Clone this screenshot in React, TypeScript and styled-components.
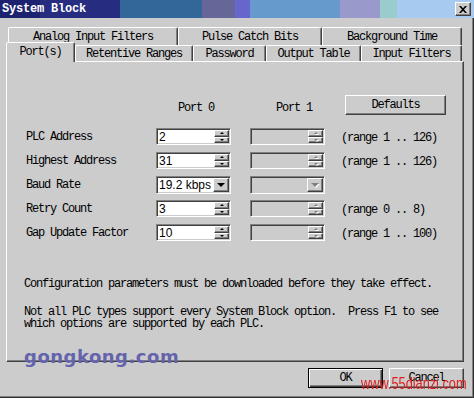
import React from 'react';
import styled, { createGlobalStyle, css } from 'styled-components';

const MONO = '"Liberation Mono", "DejaVu Sans Mono", monospace';
const SANS = '"Liberation Sans", Arial, sans-serif';
const FACE = '#cccccc';

const Global = createGlobalStyle`
  html, body { margin: 0; padding: 0; }
  body { background: ${FACE}; }
  * { box-sizing: border-box; }
`;

const Window = styled.div`
  position: relative;
  width: 474px;
  height: 398px;
  background: ${FACE};
  font-family: ${MONO};
  font-size: 12px;
  line-height: 12px;
  letter-spacing: -1.2px;
  color: #000;
  overflow: hidden;
  display: flex;
  flex-direction: column;
  box-shadow: inset -1px -1px 0 #303030, inset -2px -2px 0 #808080;
`;

const TitleBar = styled.div`
  height: 18px;
  display: flex;
  align-items: center;
  justify-content: space-between;
  padding: 0 3px 0 2px;
  background: linear-gradient(
    to right,
    #1c2270 0 40px,
    #262c80 40px 120px,
    #336699 120px 202px,
    #666699 202px 235px,
    #6666cc 235px 250px,
    #6699cc 250px 340px,
    #9999cc 340px 380px,
    #99cccc 380px 397px,
    #a6caf0 397px
  );
`;

const Title = styled.span`
  color: #fff;
  font-weight: bold;
  letter-spacing: -0.2px;
`;

const CloseButton = styled.div`
  width: 16px;
  height: 14px;
  display: flex;
  align-items: center;
  justify-content: center;
  background: ${FACE};
  border: 1px solid;
  border-color: #fff #404040 #404040 #fff;
  box-shadow: inset -1px -1px 0 #808080;
`;

const TabArea = styled.div`
  display: flex;
  flex-direction: column;
  padding-top: 9px;
`;

const TabRow = styled.div<{ $indent: number; $height: number }>`
  display: flex;
  align-items: flex-end;
  height: ${(p) => p.$height}px;
  padding-left: ${(p) => p.$indent}px;
`;

const Tab = styled.div<{ $w: number; $active?: boolean }>`
  width: ${(p) => p.$w}px;
  height: 100%;
  display: flex;
  align-items: center;
  justify-content: center;
  background: ${FACE};
  border-top: 1px solid #fff;
  border-left: 1px solid #fff;
  border-right: 1px solid #404040;
  box-shadow: inset -1px 0 0 #808080;
  border-radius: 2px 2px 0 0;
  ${(p) =>
    p.$active &&
    css`
      height: 20px;
      margin-bottom: -1px;
      padding-bottom: 2px;
      position: relative;
      z-index: 1;
    `}
`;

const Panel = styled.div`
  margin-left: 6px;
  width: 458px;
  height: 301px;
  border-top: 1px solid #fff;
  border-left: 1px solid #fff;
  border-right: 1px solid #404040;
  border-bottom: 1px solid #404040;
  box-shadow: inset -1px -1px 0 #808080;
  padding: 33px 0 0 19px;
  display: flex;
  flex-direction: column;
`;

const FormGrid = styled.div`
  display: grid;
  grid-template-columns: 130px 94px 91px auto;
  grid-template-rows: 26px repeat(5, 17px);
  row-gap: 7px;
  align-items: start;
`;

const ColHeader = styled.div<{ $offset: number }>`
  margin-top: 7px;
  padding-left: ${(p) => p.$offset}px;
`;

const FieldLabel = styled.div`
  align-self: center;
`;

const RangeLabel = styled.div`
  align-self: center;
  margin-top: 3px;
`;

const Raised = css`
  background: ${FACE};
  border: 1px solid;
  border-color: #fff #404040 #404040 #fff;
  box-shadow: inset -1px -1px 0 #808080;
`;

const PushButton = styled.button<{ $w: number; $default?: boolean }>`
  ${Raised}
  width: ${(p) => p.$w}px;
  height: 20px;
  padding: 0;
  font-family: ${MONO};
  font-size: 12px;
  letter-spacing: -1.2px;
  color: #000;
  display: flex;
  align-items: center;
  justify-content: center;
  ${(p) =>
    p.$default &&
    css`
      border-color: #000;
      box-shadow: inset 1px 1px 0 #fff, inset -1px -1px 0 #404040,
        inset -2px -2px 0 #808080;
    `}
`;

const DefaultsButton = styled(PushButton)`
  margin-left: 4px;
`;

const Field = styled.div<{ $disabled?: boolean; $h?: number }>`
  width: 75px;
  height: ${(p) => p.$h ?? 17}px;
  display: flex;
  background: ${(p) => (p.$disabled ? FACE : '#fff')};
  border-top: 1px solid #808080;
  border-left: 1px solid #808080;
  border-bottom: 1px solid #fff;
  border-right: 1px solid #fff;
  box-shadow: inset 1px 1px 0 #404040, inset -1px -1px 0 ${FACE};
  padding: 1px 1px 1px 1px;
`;

const Value = styled.div`
  flex: 1;
  display: flex;
  align-items: center;
  padding-left: 1px;
  font-family: ${SANS};
  font-size: 12px;
  letter-spacing: 0;
`;

const Spinner = styled.div`
  width: 15px;
  display: flex;
  flex-direction: column;
`;

const SpinPart = styled.div`
  ${Raised}
  flex: 1;
  display: flex;
  align-items: center;
  justify-content: center;
`;

const Arrow = styled.span<{ $dir: 'up' | 'down'; $size: number; $disabled?: boolean }>`
  width: 0;
  height: 0;
  border-left: ${(p) => p.$size}px solid transparent;
  border-right: ${(p) => p.$size}px solid transparent;
  ${(p) =>
    p.$dir === 'up'
      ? css`border-bottom: ${p.$size}px solid ${p.$disabled ? '#808080' : '#000'};`
      : css`border-top: ${p.$size}px solid ${p.$disabled ? '#808080' : '#000'};`}
  ${(p) => p.$disabled && css`filter: drop-shadow(1px 1px 0 #fff);`}
`;

const DropButton = styled.div`
  ${Raised}
  width: 16px;
  display: flex;
  align-items: center;
  justify-content: center;
`;

const Notes = styled.div`
  margin: 37px 0 0 -2px;
  display: flex;
  flex-direction: column;
  gap: 16px;
`;

const Para = styled.p`
  margin: 0;
  white-space: pre;
`;

const ButtonRow = styled.div`
  margin-top: 6px;
  width: 464px;
  display: flex;
  justify-content: flex-end;
  gap: 6px;
`;

const WatermarkGong = styled.span`
  position: absolute;
  left: 24px;
  top: 348px;
  font-family: 'DejaVu Sans', sans-serif;
  font-weight: bold;
  font-size: 18px;
  line-height: 18px;
  letter-spacing: 0.5px;
  color: #6464ad;
`;

const WatermarkDianzi = styled.span`
  position: absolute;
  left: 361px;
  top: 375px;
  font-family: ${SANS};
  font-size: 17px;
  line-height: 17px;
  letter-spacing: 0;
  color: #e01e1e;
  transform: scaleX(0.75);
  transform-origin: left center;
`;

function SpinField({ value, disabled }: { value?: string; disabled?: boolean }) {
  return (
    <Field $disabled={disabled}>
      <Value>{value}</Value>
      <Spinner>
        <SpinPart>
          <Arrow $dir="up" $size={2} $disabled={disabled} />
        </SpinPart>
        <SpinPart>
          <Arrow $dir="down" $size={2} $disabled={disabled} />
        </SpinPart>
      </Spinner>
    </Field>
  );
}

function DropField({ value, disabled }: { value?: string; disabled?: boolean }) {
  return (
    <Field $disabled={disabled} $h={18}>
      <Value>{value}</Value>
      <DropButton>
        <Arrow $dir="down" $size={4} $disabled={disabled} />
      </DropButton>
    </Field>
  );
}

const rows = [
  { label: 'PLC Address', value: '2', range: '(range 1 .. 126)' },
  { label: 'Highest Address', value: '31', range: '(range 1 .. 126)' },
  { label: 'Baud Rate', value: '19.2 kbps', range: '', select: true },
  { label: 'Retry Count', value: '3', range: '(range 0 .. 8)' },
  { label: 'Gap Update Factor', value: '10', range: '(range 1 .. 100)' },
];

export default function App() {
  return (
    <>
      <Global />
      <Window>
        <TitleBar>
          <Title>System Block</Title>
          <CloseButton>
            <svg width="8" height="7" viewBox="0 0 8 7">
              <path d="M0 0h2l2 2.2L6 0h2L5 3.5 8 7H6L4 4.8 2 7H0l3-3.5z" fill="#000" />
            </svg>
          </CloseButton>
        </TitleBar>
        <TabArea>
          <TabRow $indent={8} $height={18}>
            <Tab $w={170}>Analog Input Filters</Tab>
            <Tab $w={144}>Pulse Catch Bits</Tab>
            <Tab $w={140}>Background Time</Tab>
          </TabRow>
          <TabRow $indent={6} $height={16}>
            <Tab $w={69} $active>
              Port(s)
            </Tab>
            <Tab $w={118}>Retentive Ranges</Tab>
            <Tab $w={73}>Password</Tab>
            <Tab $w={95}>Output Table</Tab>
            <Tab $w={101}>Input Filters</Tab>
          </TabRow>
        </TabArea>
        <Panel>
          <FormGrid>
            <div />
            <ColHeader $offset={22}>Port 0</ColHeader>
            <ColHeader $offset={26}>Port 1</ColHeader>
            <DefaultsButton $w={101}>Defaults</DefaultsButton>
            {rows.map((r) => (
              <React.Fragment key={r.label}>
                <FieldLabel>{r.label}</FieldLabel>
                {r.select ? <DropField value={r.value} /> : <SpinField value={r.value} />}
                {r.select ? <DropField disabled /> : <SpinField disabled />}
                <RangeLabel>{r.range}</RangeLabel>
              </React.Fragment>
            ))}
          </FormGrid>
          <Notes>
            <Para>Configuration parameters must be downloaded before they take effect.</Para>
            <Para>
              {'Not all PLC types support every System Block option.  Press F1 to see\nwhich options are supported by each PLC.'}
            </Para>
          </Notes>
        </Panel>
        <ButtonRow>
          <PushButton $w={75} $default>
            OK
          </PushButton>
          <PushButton $w={75}>Cancel</PushButton>
        </ButtonRow>
        <WatermarkGong>gongkong.com</WatermarkGong>
        <WatermarkDianzi>www.55dianzi.com</WatermarkDianzi>
      </Window>
    </>
  );
}
